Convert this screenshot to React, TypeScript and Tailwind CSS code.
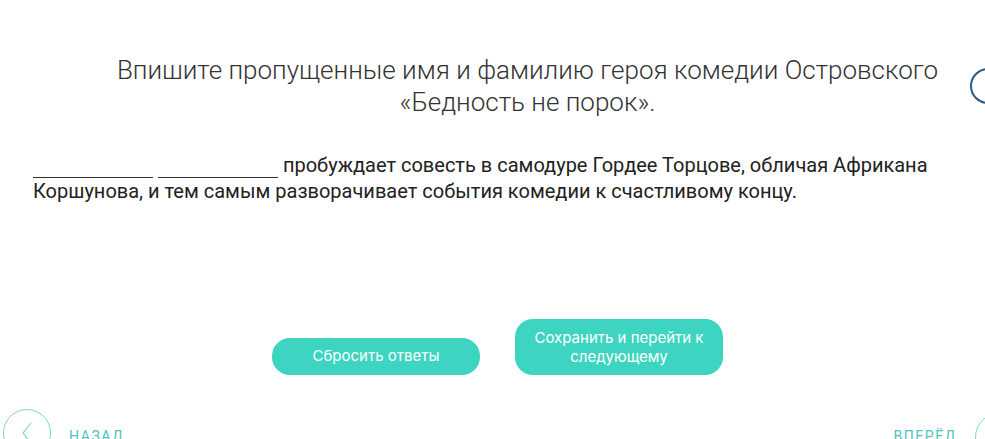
export default function App() {
  const blank = <span className="inline-block w-[120px] border-b border-[#333] align-[-6px]"></span>;

  return (
    <div className="relative h-[439px] w-full overflow-hidden bg-white font-['Roboto',sans-serif] text-[#333]">
      <div className="absolute left-[970px] top-[68px] h-[36px] w-[36px] rounded-full border-[2.5px] border-[#2b5a86]"></div>

      <h1 className="pl-[70px] pt-[54px] text-center text-[26px] font-light leading-[32px] text-[#333]">
        Впишите пропущенные имя и фамилию героя комедии Островского
        <br />
        «Бедность не порок».
      </h1>

      <p className="mt-[34px] pl-[33px] pr-[15px] text-[20px] leading-[26px] text-[#222]">
        {blank} {blank} пробуждает совесть в самодуре Гордее Торцове, обличая Африкана Коршунова, и тем самым
        разворачивает события комедии к счастливому концу.
      </p>

      <div className="mt-[115px] flex items-end justify-center gap-[35px] pl-[10px] font-['Inter',sans-serif] text-[15px] text-white">
        <button className="h-[37px] w-[208px] rounded-[18px] bg-[#3dd5c1]">Сбросить ответы</button>
        <button className="h-[56px] w-[208px] rounded-[18px] bg-[#3dd5c1] px-4 leading-[19px]">
          Сохранить и перейти к следующему
        </button>
      </div>

      <div className="mt-[34px] flex items-start justify-between text-[14px] uppercase tracking-[1.6px] text-[#4fc3bd]">
        <div className="flex items-start">
          <div className="ml-[3px] flex h-[48px] w-[48px] items-center justify-center rounded-full border border-[#7fd6cc]">
            <svg width="12" height="22" viewBox="0 0 12 22" fill="none" stroke="#7fd6cc" strokeWidth="1.2">
              <path d="M10 1 L2 11 L10 21" />
            </svg>
          </div>
          <span className="ml-[18px] mt-[17px]">Назад</span>
        </div>
        <div className="flex items-start">
          <span className="mr-[18px] mt-[17px]">Вперёд</span>
          <div className="mr-[-38px] mt-[4px] h-[48px] w-[48px] rounded-full border border-[#7fd6cc]"></div>
        </div>
      </div>
    </div>
  );
}
